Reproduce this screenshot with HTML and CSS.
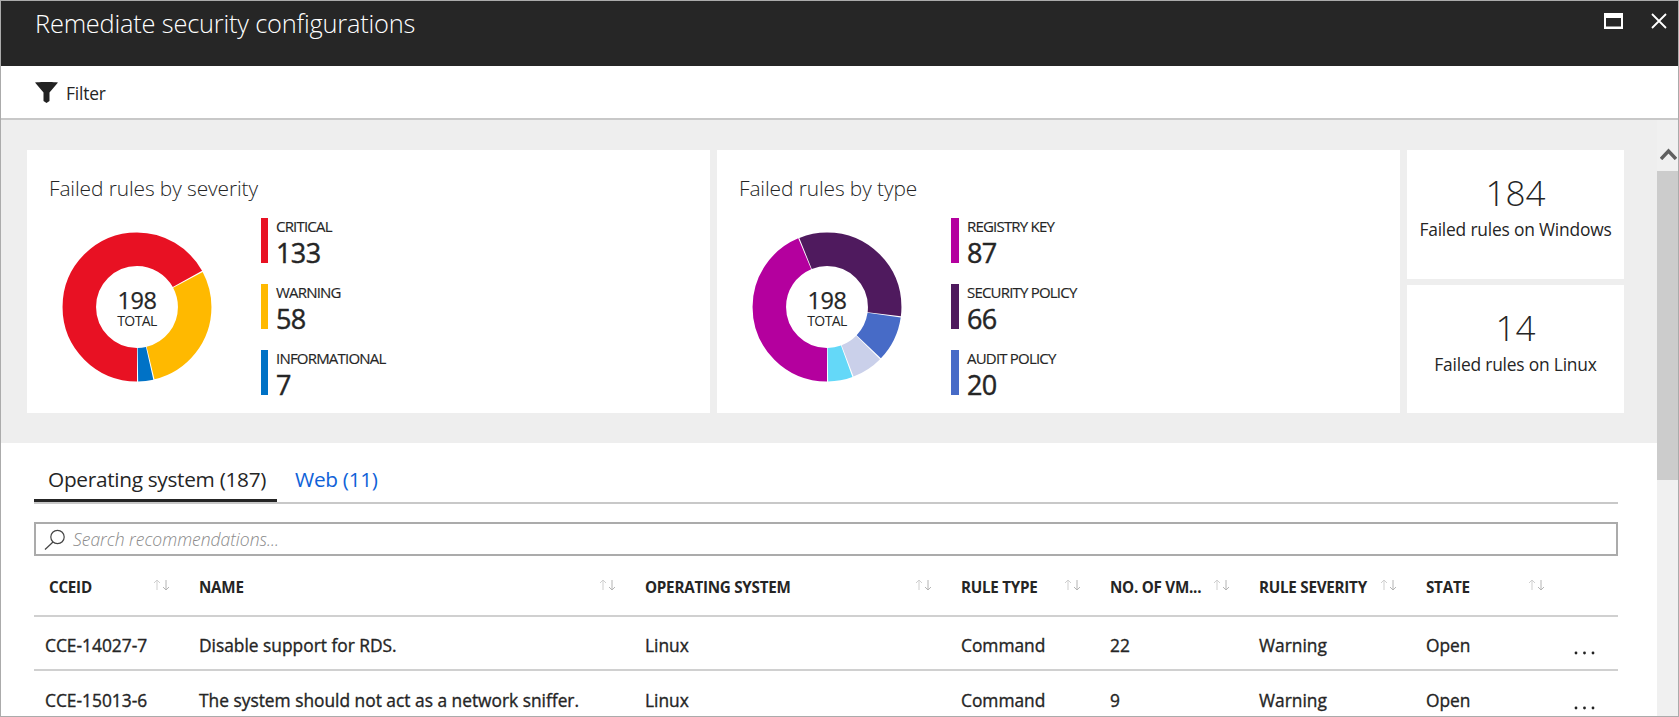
FILE: index.html

```html
<!doctype html>
<html lang="en">
<head>
    <meta http-equiv="Content-Type" content="text/html; charset=utf-8"/>
    <title>Remediate security configurations</title>
    <link rel="stylesheet" href="styles.css">
</head>

<body>

<svg class="defs" width="0" height="0">
    <symbol id="sort" viewBox="0 0 17 12">
        <path d="M4 11V1M1 4l3-3 3 3" fill="none" stroke="#cfcfcf" stroke-width="1"/>
        <path d="M13 1v10M10 8l3 3 3-3" fill="none" stroke="#b4b4b4" stroke-width="1"/>
    </symbol>
    <symbol id="dots" viewBox="0 0 21 4">
        <circle cx="2" cy="2" r="1.4" fill="#222"/>
        <circle cx="10.5" cy="2" r="1.4" fill="#222"/>
        <circle cx="19" cy="2" r="1.4" fill="#222"/>
    </symbol>
</svg>

<div class="frame">
    <!--title bar-->
    <div class="header">
        <div class="title">Remediate security configurations</div>
        <div class="win-btns">
            <svg width="19" height="16" viewBox="0 0 19 16"><path d="M0 0h19v16H0zM2 5v8.5h15V5z" fill="#fff" fill-rule="evenodd"/></svg>
            <svg width="16" height="16" viewBox="0 0 16 16"><path d="M1 1l14 14M15 1L1 15" fill="none" stroke="#fff" stroke-width="1.8"/></svg>
        </div>
    </div>

    <!--toolbar-->
    <div class="toolbar">
        <svg width="23" height="21" viewBox="0 0 23 21"><path d="M0 0.5C6 -0.2 17 -0.2 23 0.5L14.5 10.5V19L11.5 21L8.5 19V10.5Z" fill="#222"/></svg>
        <span>Filter</span>
    </div>

    <div class="body">
        <div class="content">
            <!--summary cards-->
            <div class="summary">
                <div class="card">
                    <div class="card-title">Failed rules by severity</div>
                    <div class="chart-row">
                        <div class="donut">
                            <svg width="150" height="150" viewBox="0 0 150 150">
                                <g class="rings" fill="none" stroke-width="33.5">
                                    <circle cx="75" cy="75" r="57.7" pathLength="198" stroke="#e81123" stroke-dasharray="132.5 65.5" stroke-dashoffset="0"/>
                                    <circle cx="75" cy="75" r="57.7" pathLength="198" stroke="#ffb900" stroke-dasharray="57.5 140.5" stroke-dashoffset="-133"/>
                                    <circle cx="75" cy="75" r="57.7" pathLength="198" stroke="#0072c6" stroke-dasharray="6.5 191.5" stroke-dashoffset="-191"/>
                                </g>
                            </svg>
                            <div class="donut-label"><b>198</b><span>TOTAL</span></div>
                        </div>
                        <div class="legend">
                            <div class="legend-item">
                                <i class="bar bar-critical"></i>
                                <div><div class="legend-name">CRITICAL</div><div class="legend-num">133</div></div>
                            </div>
                            <div class="legend-item">
                                <i class="bar bar-warning"></i>
                                <div><div class="legend-name">WARNING</div><div class="legend-num">58</div></div>
                            </div>
                            <div class="legend-item">
                                <i class="bar bar-info"></i>
                                <div><div class="legend-name">INFORMATIONAL</div><div class="legend-num">7</div></div>
                            </div>
                        </div>
                    </div>
                </div>

                <div class="card">
                    <div class="card-title">Failed rules by type</div>
                    <div class="chart-row">
                        <div class="donut">
                            <svg width="150" height="150" viewBox="0 0 150 150">
                                <g class="rings" fill="none" stroke-width="33.5">
                                    <circle cx="75" cy="75" r="57.7" pathLength="198" stroke="#b4009e" stroke-dasharray="86.5 111.5" stroke-dashoffset="0"/>
                                    <circle cx="75" cy="75" r="57.7" pathLength="198" stroke="#4f1a5e" stroke-dasharray="65.5 132.5" stroke-dashoffset="-87"/>
                                    <circle cx="75" cy="75" r="57.7" pathLength="198" stroke="#476bc7" stroke-dasharray="19.5 178.5" stroke-dashoffset="-153"/>
                                    <circle cx="75" cy="75" r="57.7" pathLength="198" stroke="#cad0ea" stroke-dasharray="13.5 184.5" stroke-dashoffset="-173"/>
                                    <circle cx="75" cy="75" r="57.7" pathLength="198" stroke="#64d8f8" stroke-dasharray="10.5 187.5" stroke-dashoffset="-187"/>
                                </g>
                            </svg>
                            <div class="donut-label"><b>198</b><span>TOTAL</span></div>
                        </div>
                        <div class="legend">
                            <div class="legend-item">
                                <i class="bar bar-wide bar-registry"></i>
                                <div><div class="legend-name">REGISTRY KEY</div><div class="legend-num">87</div></div>
                            </div>
                            <div class="legend-item">
                                <i class="bar bar-wide bar-security"></i>
                                <div><div class="legend-name">SECURITY POLICY</div><div class="legend-num">66</div></div>
                            </div>
                            <div class="legend-item">
                                <i class="bar bar-wide bar-audit"></i>
                                <div><div class="legend-name">AUDIT POLICY</div><div class="legend-num">20</div></div>
                            </div>
                        </div>
                    </div>
                </div>

                <div class="stats">
                    <div class="stat">
                        <div class="stat-num">184</div>
                        <div class="stat-text">Failed rules on Windows</div>
                    </div>
                    <div class="stat">
                        <div class="stat-num">14</div>
                        <div class="stat-text">Failed rules on Linux</div>
                    </div>
                </div>
            </div>

            <!--list-->
            <div class="list">
                <div class="tabs">
                    <div class="tab current">Operating system (187)</div>
                    <div class="tab">Web (11)</div>
                </div>

                <div class="search">
                    <svg width="22" height="21" viewBox="0 0 22 21"><circle cx="13.5" cy="8" r="6.7" fill="none" stroke="#444" stroke-width="1.2"/><path d="M9 13L1 20.5" fill="none" stroke="#444" stroke-width="1.2"/></svg>
                    <span>Search recommendations...</span>
                </div>

                <div class="row row-head">
                    <div class="cell first">CCEID<svg class="sort"><use href="#sort"/></svg></div>
                    <div class="cell">NAME<svg class="sort"><use href="#sort"/></svg></div>
                    <div class="cell">OPERATING SYSTEM<svg class="sort"><use href="#sort"/></svg></div>
                    <div class="cell">RULE TYPE<svg class="sort"><use href="#sort"/></svg></div>
                    <div class="cell">NO. OF VM...<svg class="sort"><use href="#sort"/></svg></div>
                    <div class="cell">RULE SEVERITY<svg class="sort"><use href="#sort"/></svg></div>
                    <div class="cell">STATE<svg class="sort"><use href="#sort"/></svg></div>
                    <div class="cell"></div>
                </div>
                <div class="row">
                    <div class="cell">CCE-14027-7</div>
                    <div class="cell">Disable support for RDS.</div>
                    <div class="cell">Linux</div>
                    <div class="cell">Command</div>
                    <div class="cell">22</div>
                    <div class="cell">Warning</div>
                    <div class="cell">Open</div>
                    <div class="cell"><svg class="more"><use href="#dots"/></svg></div>
                </div>
                <div class="row row-last">
                    <div class="cell">CCE-15013-6</div>
                    <div class="cell">The system should not act as a network sniffer.</div>
                    <div class="cell">Linux</div>
                    <div class="cell">Command</div>
                    <div class="cell">9</div>
                    <div class="cell">Warning</div>
                    <div class="cell">Open</div>
                    <div class="cell"><svg class="more"><use href="#dots"/></svg></div>
                </div>
            </div>
        </div>

        <!--scrollbar-->
        <div class="scrollbar">
            <svg width="17" height="13" viewBox="0 0 17 13"><path d="M1 12L8.5 4L16 12" fill="none" stroke="#606060" stroke-width="3.4"/></svg>
            <div class="thumb"></div>
        </div>
    </div>
</div>

</body>
</html>
```

FILE: styles.css

```css
* {
    padding: 0;
    margin: 0;
    box-sizing: border-box;
}
html, body {
    height: 100%;
    overflow: hidden;
    background: #fff;
}
body {
    font-family: "Open Sans", "Noto Sans", sans-serif;
    color: #252525;
}
.defs {
    position: absolute;
}
.frame {
    height: 717px;
    display: flex;
    flex-direction: column;
    border: 1px solid #ababab;
    overflow: hidden;
}
.header {
    height: 65px;
    flex: none;
    background: #262626;
    color: #fff;
    display: flex;
    justify-content: space-between;
    padding: 0 11px 0 34px;
}
.title {
    font-size: 25.4px;
    font-weight: 300;
    line-height: 44px;
    letter-spacing: -0.2px;
}
.win-btns {
    display: flex;
    align-items: flex-start;
    gap: 28px;
    padding-top: 12px;
}
.toolbar {
    height: 54px;
    flex: none;
    display: flex;
    align-items: center;
    gap: 8px;
    padding-left: 34px;
    border-bottom: 2px solid #c8c8c8;
    font-size: 17.4px;
    letter-spacing: -0.2px;
}
.toolbar span {
    padding-top: 2px;
}
.body {
    flex: 1;
    display: flex;
    min-height: 0;
}
.content {
    flex: 1;
    min-width: 0;
}
.summary {
    height: 323px;
    background: #eee;
    display: flex;
    gap: 7px;
    padding: 30px 0 30px 26px;
}
.card {
    width: 683px;
    background: #fff;
    padding: 24px 0 0 22px;
}
.card-title {
    font-size: 20.9px;
    font-weight: 300;
    line-height: 28px;
    letter-spacing: -0.1px;
}
.chart-row {
    display: flex;
    align-items: center;
    margin-top: 16px;
    padding-left: 13px;
    gap: 49px;
}
.donut {
    width: 150px;
    height: 150px;
    position: relative;
}
.rings {
    transform: rotate(90deg);
    transform-origin: 75px 75px;
}
.donut-label {
    position: absolute;
    inset: 0;
    display: flex;
    flex-direction: column;
    align-items: center;
    justify-content: center;
    padding-top: 2px;
}
.donut-label b {
    font-size: 23.5px;
    font-weight: 400;
    line-height: 26px;
    letter-spacing: -0.5px;
    -webkit-text-stroke: 0.25px #252525;
}
.donut-label span {
    font-size: 14px;
    line-height: 16px;
    letter-spacing: -0.6px;
}
.legend {
    display: flex;
    flex-direction: column;
    gap: 21px;
}
.legend-item {
    height: 45px;
    display: flex;
    gap: 8px;
}
.bar {
    display: block;
    width: 7px;
    height: 45px;
}
.bar-wide {
    width: 8px;
}
.bar-critical { background: #e81123; }
.bar-warning { background: #ffb900; }
.bar-info { background: #0072c6; }
.bar-registry { background: #b4009e; }
.bar-security { background: #4f1a5e; }
.bar-audit { background: #476bc7; }
.legend-name {
    font-size: 15px;
    line-height: 18px;
    margin-top: -1px;
    letter-spacing: -0.8px;
    -webkit-text-stroke: 0.15px #252525;
}
.legend-num {
    font-size: 27px;
    line-height: 27px;
    margin-top: 4px;
    letter-spacing: -0.6px;
    -webkit-text-stroke: 0.45px #252525;
}
.stats {
    width: 217px;
    display: flex;
    flex-direction: column;
    gap: 6px;
}
.stat {
    flex: 1;
    background: #fff;
    text-align: center;
    padding-top: 18px;
}
.stat-num {
    font-size: 35px;
    font-weight: 300;
    line-height: 50px;
}
.stat-text {
    font-size: 17.4px;
    line-height: 22px;
    letter-spacing: -0.2px;
}
.list {
    padding: 20px 39px 0 33px;
}
.tabs {
    display: flex;
    height: 41px;
    border-bottom: 2px solid #c8c8c8;
}
.tab {
    height: 39px;
    padding: 0 18px;
    font-size: 20.8px;
    line-height: 32px;
    color: #0f62d8;
    letter-spacing: -0.3px;
    white-space: nowrap;
}
.tab.current {
    width: 243px;
    padding: 0 0 0 14px;
    color: #252525;
    border-bottom: 3px solid #252525;
}
.search {
    height: 34px;
    margin-top: 18px;
    border: 2px solid #ababab;
    display: flex;
    align-items: center;
    gap: 7px;
    padding-left: 8px;
    font-size: 17.5px;
    font-style: italic;
    font-weight: 300;
    color: #8a8a8a;
}
.row {
    display: grid;
    grid-template-columns: 154px 446px 316px 149px 149px 167px 148px 44px;
    align-items: center;
    padding: 3px 0 0 11px;
    height: 54px;
    border-bottom: 2px solid #d0d0d0;
    font-size: 17.35px;
    -webkit-text-stroke: 0.35px #252525;
}
.row-head {
    height: 61px;
    padding-top: 3px;
    font-size: 15.2px;
    font-weight: 700;
    letter-spacing: -0.25px;
    -webkit-text-stroke: 0;
}
.row-last {
    border-bottom: 0;
}
.cell {
    display: flex;
    justify-content: space-between;
    align-items: center;
    white-space: nowrap;
    padding-right: 29px;
}
.first {
    padding-left: 4px;
}
.sort {
    width: 17px;
    height: 12px;
    margin-top: -5px;
}
.more {
    width: 21px;
    height: 4px;
    margin-top: 17px;
    flex: none;
}
.row .cell:last-child {
    padding-right: 0;
}
.scrollbar {
    width: 21px;
    flex: none;
    background: #f0f0f0;
    padding-top: 27px;
}
.scrollbar svg {
    display: block;
    margin-left: 3px;
}
.thumb {
    height: 309px;
    margin-top: 11px;
    background: #ccc;
}
```
